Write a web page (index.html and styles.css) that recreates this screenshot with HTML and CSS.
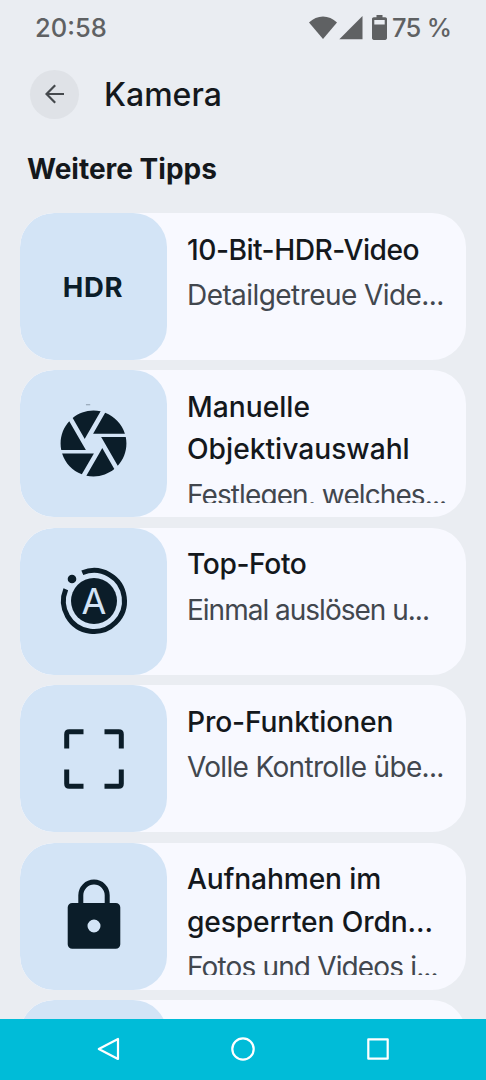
FILE: index.html
```html
<!DOCTYPE html>
<html lang="de">
<head>
  <meta charset="UTF-8" />
  <meta name="viewport" content="width=device-width, initial-scale=1.0"/>
  <title>Kamera</title>
  <link rel="stylesheet" href="styles.css">
</head>
<body>

  <div class="status">
    <span class="clock">20:58</span>
    <div class="status-icons">
      <svg width="28" height="24" viewBox="0 0 28 24"><path d="M0 6.5C8-1.6 20-1.6 28 6.5L14 23z"/></svg>
      <svg class="signal" width="24" height="24" viewBox="0 0 24 24"><path d="M23.5 0v23.3H.3z"/></svg>
      <svg class="battery" width="15" height="25" viewBox="0 0 15 25"><path fill-rule="evenodd" d="M4.5 0h6v2.3h2.7c1 0 1.8.8 1.8 1.8v19c0 1-.8 1.9-1.8 1.9H1.8C.8 25 0 24.1 0 23.1V4.1c0-1 .8-1.8 1.8-1.8h2.700zM2.300 5v4.500h10.400V5z"/></svg>
      <span class="percent">75 %</span>
    </div>
  </div>

  <header class="topbar">
    <button type="button" class="back" aria-label="Zurück">
      <svg width="20" height="20" viewBox="0 0 20 20"><path d="M19 10H1.500M10.200 1.200L1.500 10l8.700 8.800"/></svg>
    </button>
    <h1>Kamera</h1>
  </header>

  <h2>Weitere Tipps</h2>

  <main class="list">
    <div class="card">
      <div class="thumb">
        <svg width="80" height="80" viewBox="0 0 80 80"><text class="hdr" x="8.800" y="50">HDR</text></svg>
      </div>
      <div class="text">
        <h3 class="t-hdr">10-Bit-HDR-Video</h3>
        <p class="d-hdr">Detailgetreue Vide...</p>
      </div>
    </div>

    <div class="card">
      <div class="thumb">
        <svg width="79" height="79" viewBox="0 0 24 24">
          <path d="M9.400 10.500l4.770-8.260C13.470 2.090 12.750 2 12 2c-2.400 0-4.600.85-6.320 2.250l3.660 6.350.06-.1zM21.540 9c-.92-2.920-3.150-5.260-6-6.340L11.880 9h9.660zm.26 1h-7.490l.29.5 4.760 8.250C21 16.970 22 14.610 22 12c0-.69-.07-1.350-.2-2zM8.540 12l-3.900-6.750C3.010 7.030 2 9.390 2 12c0 .69.07 1.350.2 2h7.490l-1.150-2zm-6.080 3c.92 2.920 3.150 5.260 6 6.340L12.120 15H2.460zm11.270 0l-3.900 6.760c.7.15 1.420.24 2.170.24 2.400 0 4.600-.85 6.320-2.250l-3.660-6.350-.93 1.600z"/>
          <path class="mark" d="M9.700.1h1.300v.3H9.700z"/>
        </svg>
      </div>
      <div class="text">
        <h3>Manuelle <br>Objektivauswahl</h3>
        <p class="d-lens">Festlegen, welches...</p>
      </div>
    </div>

    <div class="card">
      <div class="thumb">
        <svg width="80" height="80" viewBox="0 0 80 80">
          <circle cx="40" cy="40" r="23"/>
          <path class="ring" d="M28.300 11.800A30.500 30.500 0 1 1 11.800 28.300"/>
          <circle cx="18" cy="18" r="4.300"/>
          <text class="letter" x="40" y="53" text-anchor="middle">A</text>
        </svg>
      </div>
      <div class="text">
        <h3 class="t-top">Top-Foto</h3>
        <p class="d-top">Einmal auslösen u...</p>
      </div>
    </div>

    <div class="card">
      <div class="thumb">
        <svg width="80" height="80" viewBox="0 0 80 80"><path class="corners" d="M12.700 29.500V15.200q0-2.500 2.500-2.500H29.500M50.500 12.700H64.800q2.500 0 2.500 2.500V29.500M67.300 50.500V64.800q0 2.500-2.500 2.500H50.500M29.500 67.300H15.200q-2.500 0-2.500-2.500V50.500"/></svg>
      </div>
      <div class="text">
        <h3 class="t-pro">Pro-Funktionen</h3>
        <p class="d-pro">Volle Kontrolle übe...</p>
      </div>
    </div>

    <div class="card">
      <div class="thumb">
        <svg width="80" height="80" viewBox="0 0 80 80">
          <path fill-rule="evenodd" d="M18.200 27H61.800a4.500 4.500 0 0 1 4.500 4.500V68.300a4.500 4.500 0 0 1-4.500 4.500H18.200a4.500 4.500 0 0 1-4.500-4.500V31.500a4.500 4.500 0 0 1 4.500-4.500zM40 43.500a6.500 6.500 0 1 0 0 13 6.500 6.500 0 0 0 0-13z"/>
          <path class="shackle" d="M26.800 29V19.300a13.200 13.200 0 0 1 26.400 0V29"/>
        </svg>
      </div>
      <div class="text">
        <h3 class="t-lock">Aufnahmen im <br>gesperrten Ordn...</h3>
        <p class="d-lock">Fotos und Videos i...</p>
      </div>
    </div>

    <div class="card">
      <div class="thumb"></div>
      <div class="text"></div>
    </div>
  </main>

  <nav class="navbar">
    <svg width="24" height="24" viewBox="0 0 24 24"><path d="M1.800 12L21 2v20z"/></svg>
    <svg width="24" height="24" viewBox="0 0 24 24"><circle cx="12" cy="12" r="10.700"/></svg>
    <svg width="24" height="24" viewBox="0 0 24 24"><path d="M2.300 2.300h19.400v19.400H2.300z"/></svg>
  </nav>

</body>
</html>
```
FILE: styles.css
```css
* {
  box-sizing: border-box;
}
body {
  margin: 0;
  height: 1080px;
  display: flex;
  flex-direction: column;
  overflow: hidden;
  font-family: Inter, Roboto, sans-serif;
  background: #eaedf2;
  color: #14181c;
}
h1, h2, h3, p {
  margin: 0;
}
svg {
  display: block;
  flex: none;
}
.status {
  height: 55px;
  flex: none;
  display: flex;
  justify-content: space-between;
  align-items: center;
  padding: 0 35px;
  font-size: 25.5px;
  font-weight: 450;
  color: #5f6163;
  fill: #5f6163;
}
.status-icons {
  display: flex;
  align-items: center;
}
.signal {
  margin-left: 2px;
}
.battery {
  margin-left: 9px;
}
.percent {
  width: 59px;
  margin-left: 5px;
  letter-spacing: -0.7px;
  white-space: nowrap;
}
.topbar {
  height: 77px;
  flex: none;
  display: flex;
  align-items: center;
  padding: 1px 0 0 30px;
  gap: 25px;
}
.back {
  width: 49px;
  height: 49px;
  padding: 0;
  border: none;
  border-radius: 50%;
  background: #dfe2e7;
  display: flex;
  align-items: center;
  justify-content: center;
}
.back svg {
  fill: none;
  stroke: #45494d;
  stroke-width: 2.2;
}
h1 {
  font-size: 32px;
  font-weight: 450;
}
h2 {
  height: 81px;
  flex: none;
  padding: 16px 0 0 27px;
  font-size: 28px;
  line-height: 42px;
  font-weight: 700;
}
.list {
  flex: 1;
  min-height: 0;
  overflow: hidden;
  padding: 0 20px;
  display: flex;
  flex-direction: column;
  gap: 10.4px;
}
.card {
  height: 147px;
  flex: none;
  display: flex;
  overflow: hidden;
  border-radius: 34px;
  background: #f8f9ff;
}
.thumb {
  width: 147px;
  flex: none;
  display: flex;
  align-items: center;
  justify-content: center;
  border-radius: 34px;
  background: #d3e4f6;
  fill: #0b1d29;
}
.text {
  flex: 1;
  margin: 14.5px 0 14.5px 20px;
  padding-top: 1px;
  overflow: hidden;
  white-space: nowrap;
  line-height: 42.6px;
}
h3 {
  font-size: 28.2px;
  font-weight: 500;
}
p {
  margin-top: 2.8px;
  font-size: 28px;
  color: #42474e;
}
/* tracking per line */
.t-hdr { letter-spacing: -0.5px; }
.t-top { letter-spacing: -0.4px; }
.t-pro, .t-lock { letter-spacing: -0.13px; }
.d-hdr { letter-spacing: -0.57px; }
.d-lens { letter-spacing: -0.9px; }
.d-top { letter-spacing: -1px; }
.d-pro { letter-spacing: -0.67px; }
.d-lock { letter-spacing: -0.85px; }
.hdr {
  font-size: 27.5px;
  font-weight: 700;
  letter-spacing: 0.6px;
}
.letter {
  font-size: 36px;
  fill: #d3e4f6;
}
.mark {
  fill: #8c9dad;
}
.ring, .corners, .shackle {
  fill: none;
  stroke: #0b1d29;
  stroke-width: 5;
}
.navbar {
  height: 61.5px;
  flex: none;
  display: flex;
  align-items: center;
  justify-content: center;
  gap: 110.5px;
  background: #00bcd8;
}
.navbar svg {
  fill: none;
  stroke: #fff;
  stroke-width: 2.2;
  stroke-linejoin: round;
}
```
